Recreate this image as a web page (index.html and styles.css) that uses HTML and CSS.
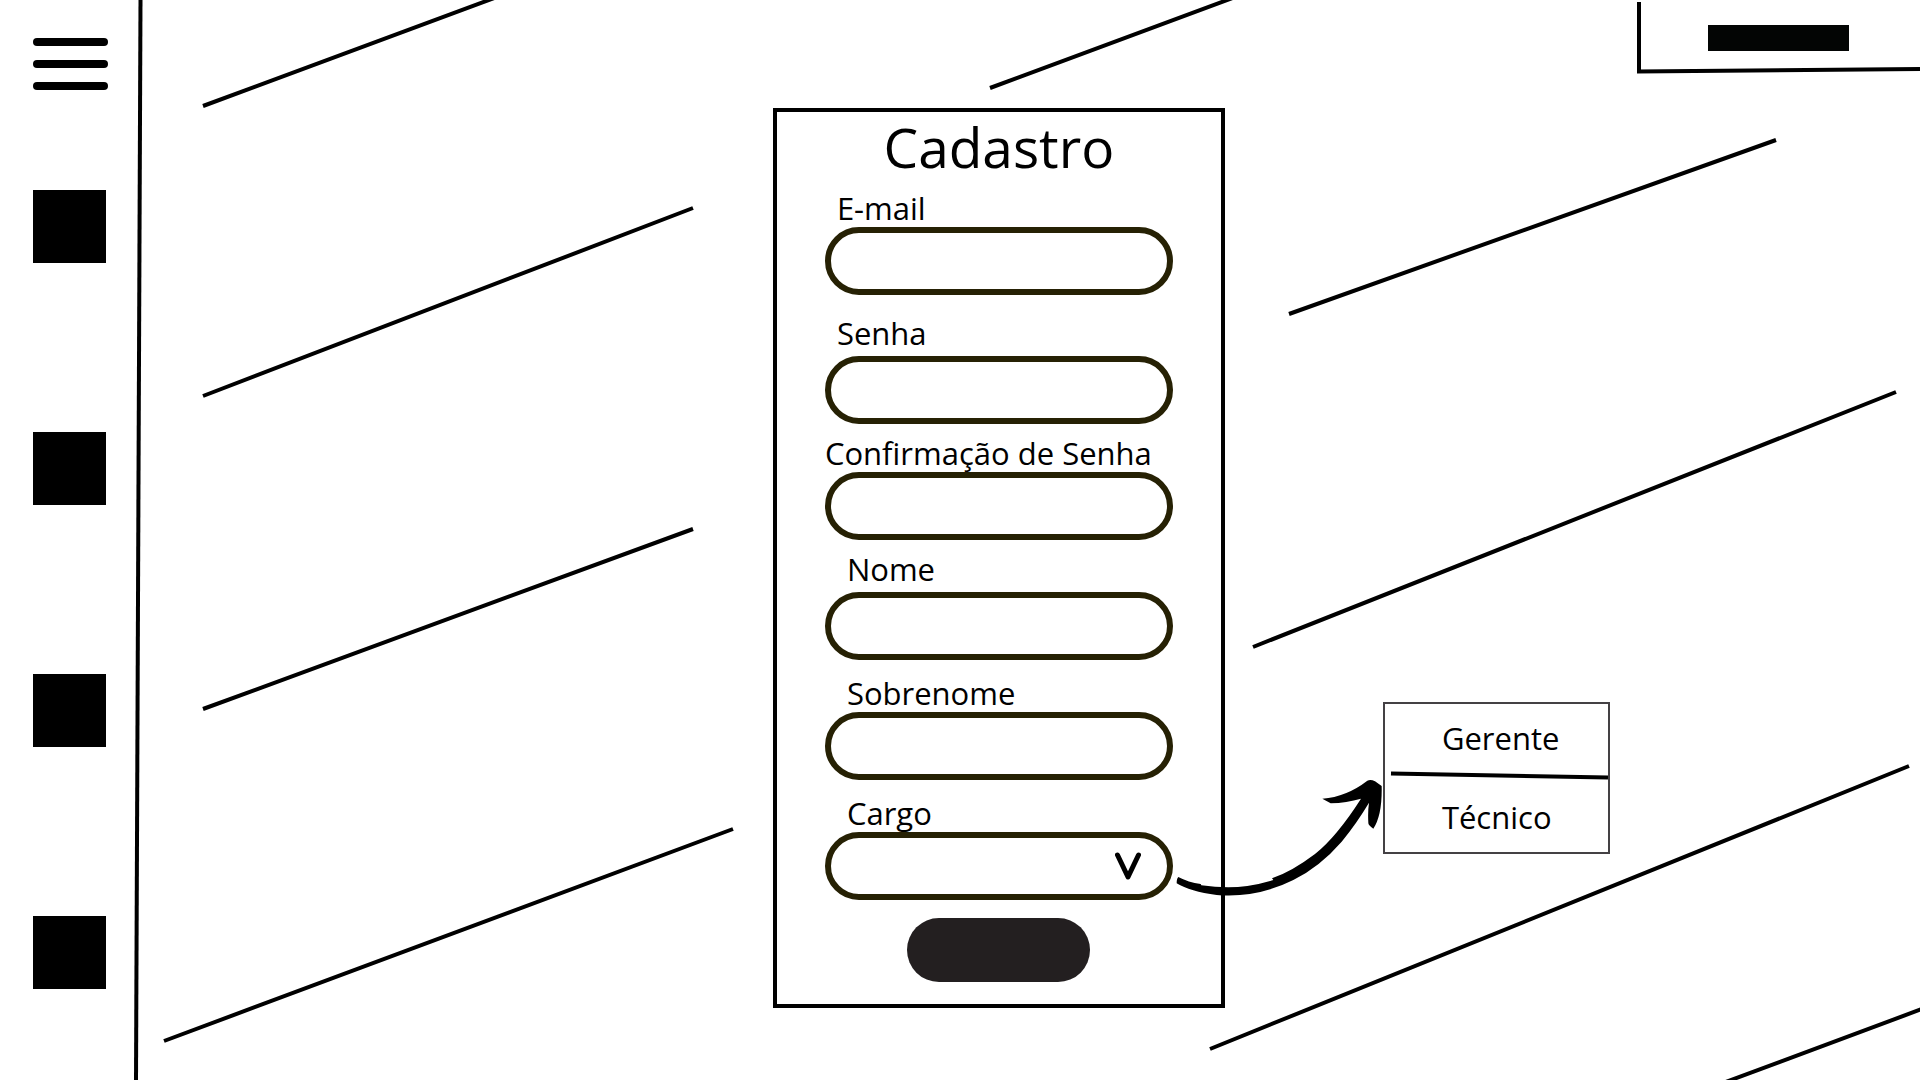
FILE: index.html
```html
<!DOCTYPE html>
<html lang="pt-BR">
<head>
  <meta charset="utf-8">
  <meta name="viewport" content="width=device-width, initial-scale=1">
  <title>Cadastro</title>
  <link rel="stylesheet" href="styles.css">
</head>
<body>
  <div class="page">
    <svg class="backdrop" viewBox="0 0 1920 1080" preserveAspectRatio="none" aria-hidden="true">
      <path d="M140.5 0L136 1080"/>
      <path d="M203 106L497 -3M203 396L693 208M203 709L693 529M164 1041L733 829"/>
      <path d="M990 88L1238 -4M1289 314L1776 140M1253 647L1896 392M1210 1049L1909 766M1723 1083L1930 1006"/>
    </svg>

    <aside class="sidebar">
      <button class="burger" type="button" aria-label="Menu">
        <span class="burger-bar"></span>
        <span class="burger-bar"></span>
        <span class="burger-bar"></span>
      </button>
      <nav class="nav" aria-label="Principal">
        <a class="nav-item" href="#" aria-label="Item 1"></a>
        <a class="nav-item" href="#" aria-label="Item 2"></a>
        <a class="nav-item" href="#" aria-label="Item 3"></a>
        <a class="nav-item" href="#" aria-label="Item 4"></a>
      </nav>
    </aside>

    <main class="main">
      <form class="card">
        <h1 class="title">Cadastro</h1>
        <div class="field">
          <label class="label label-indent" for="email">E-mail</label>
          <input class="input" id="email" type="email">
        </div>
        <div class="field field-far field-airy">
          <label class="label label-indent" for="senha">Senha</label>
          <input class="input" id="senha" type="password">
        </div>
        <div class="field field-near">
          <label class="label" for="confirmacao">Confirmação de Senha</label>
          <input class="input" id="confirmacao" type="password">
        </div>
        <div class="field field-near field-airy">
          <label class="label label-deep" for="nome">Nome</label>
          <input class="input" id="nome" type="text">
        </div>
        <div class="field field-mid">
          <label class="label label-deep" for="sobrenome">Sobrenome</label>
          <input class="input" id="sobrenome" type="text">
        </div>
        <div class="field field-mid">
          <label class="label label-deep" for="cargo">Cargo</label>
          <div class="select-box">
            <select class="input" id="cargo">
              <option value="" aria-label="Nenhum"></option>
              <option>Gerente</option>
              <option>Técnico</option>
            </select>
            <svg class="chevron" viewBox="0 0 26 28" aria-hidden="true"><path d="M2.500 3L13 25L23.500 3"/></svg>
          </div>
          <svg class="arrow" viewBox="30 90 660 390" aria-hidden="true">
            <path d="M55 411Q85 427 122 432L124 436Q200 446 262 438Q300 432 340 420L336 415Q395 395 465 342Q530 290 603 176Q560 188 512 190L487 176Q560 170 622 122Q632 117 645 124L665 138Q667 225 640 266Q624 255 625 248Q623 215 627 188Q590 250 545 305Q480 380 400 420Q290 475 170 465Q90 455 50 430Q50 415 55 411Z"/>
          </svg>
          <div class="menu">
            <div class="menu-item">Gerente</div>
            <svg class="menu-rule" viewBox="0 0 220 10" preserveAspectRatio="none" aria-hidden="true"><path d="M0 0.500L220 4.500"/></svg>
            <div class="menu-item">Técnico</div>
          </div>
        </div>
        <button class="submit" type="submit" aria-label="Cadastrar"></button>
      </form>

      <header class="account">
        <svg class="account-frame" viewBox="0 0 283 74" preserveAspectRatio="none" aria-hidden="true"><path d="M2 2V73M0 71.500L283 69"/></svg>
        <button class="account-button" type="button" aria-label="Conta"></button>
      </header>
    </main>
  </div>
</body>
</html>
```
FILE: styles.css
```css
* {
  box-sizing: border-box;
}

body {
  margin: 0;
  background: #fff;
  color: #000;
  font-family: "Open Sans", "Noto Sans", sans-serif;
  font-size: 31px;
}

button {
  padding: 0;
  border: 0;
  cursor: pointer;
}

.page {
  position: relative;
  display: flex;
  min-height: 100vh;
  overflow: hidden;
}

.backdrop {
  position: absolute;
  inset: 0;
  width: 100%;
  height: 100%;
  fill: none;
  stroke: #000;
  stroke-width: 4;
}

/* Sidebar */
.sidebar {
  position: relative;
  flex: none;
  display: flex;
  flex-direction: column;
  gap: 100px;
  width: 141px;
  padding: 38px 33px;
}

.burger {
  display: flex;
  flex-direction: column;
  gap: 14px;
  width: 75px;
  background: none;
}

.burger-bar {
  width: 100%;
  height: 8px;
  border-radius: 4px;
  background: #000;
}

.nav {
  display: flex;
  flex-direction: column;
  gap: 169px;
}

.nav-item {
  width: 73px;
  height: 73px;
  background: #000;
}

/* Content */
.main {
  position: relative;
  flex: 1;
  display: grid;
  grid-template-columns: 10fr 452px 11fr;
  align-items: start;
}

.card {
  grid-column: 2;
  display: flex;
  flex-direction: column;
  margin-top: 108px;
  padding: 0 48px 22px;
  border: 4px solid #000;
}

.title {
  margin: 0 0 7px;
  font-size: 55px;
  font-weight: 400;
  line-height: 70px;
  text-align: center;
}

.field {
  position: relative;
  display: flex;
  flex-direction: column;
}

.field-near {
  margin-top: 10px;
}

.field-mid {
  margin-top: 14px;
}

.field-far {
  margin-top: 19px;
}

.field-airy {
  gap: 4px;
}

.label {
  line-height: 38px;
  white-space: nowrap;
}

.label-indent {
  padding-left: 12px;
}

.label-deep {
  padding-left: 22px;
}

.input {
  display: block;
  width: 100%;
  height: 68px;
  padding: 0 28px;
  border: 6px solid #262104;
  border-radius: 34px;
  background: none;
  color: inherit;
  font: inherit;
  appearance: none;
}

.select-box {
  position: relative;
}

.chevron {
  position: absolute;
  top: 20px;
  right: 32px;
  width: 26px;
  height: 28px;
  fill: none;
  stroke: #000;
  stroke-width: 5;
  stroke-linecap: round;
  stroke-linejoin: round;
  pointer-events: none;
}

.arrow {
  position: absolute;
  top: -24px;
  left: 345px;
  width: 220px;
  height: 130px;
  pointer-events: none;
}

.menu {
  position: absolute;
  top: -92px;
  left: 558px;
  width: 227px;
  border: 2px solid #444144;
}

.menu-item {
  padding-left: 57px;
  line-height: 69px;
}

.menu-rule {
  display: block;
  width: 100%;
  height: 10px;
  padding-left: 6px;
  overflow: visible;
  fill: none;
  stroke: #000;
  stroke-width: 4;
}

.submit {
  align-self: center;
  width: 183px;
  height: 64px;
  margin-top: 18px;
  border-radius: 32px;
  background: #231f20;
}

/* Account area */
.account {
  position: relative;
  grid-column: 3;
  grid-row: 1;
  justify-self: end;
  width: 283px;
  padding: 25px 71px 23px;
}

.account-frame {
  position: absolute;
  inset: 0;
  width: 100%;
  height: 100%;
  fill: none;
  stroke: #000;
  stroke-width: 4;
}

.account-button {
  position: relative;
  display: block;
  width: 100%;
  height: 26px;
  background: #030504;
}
```
